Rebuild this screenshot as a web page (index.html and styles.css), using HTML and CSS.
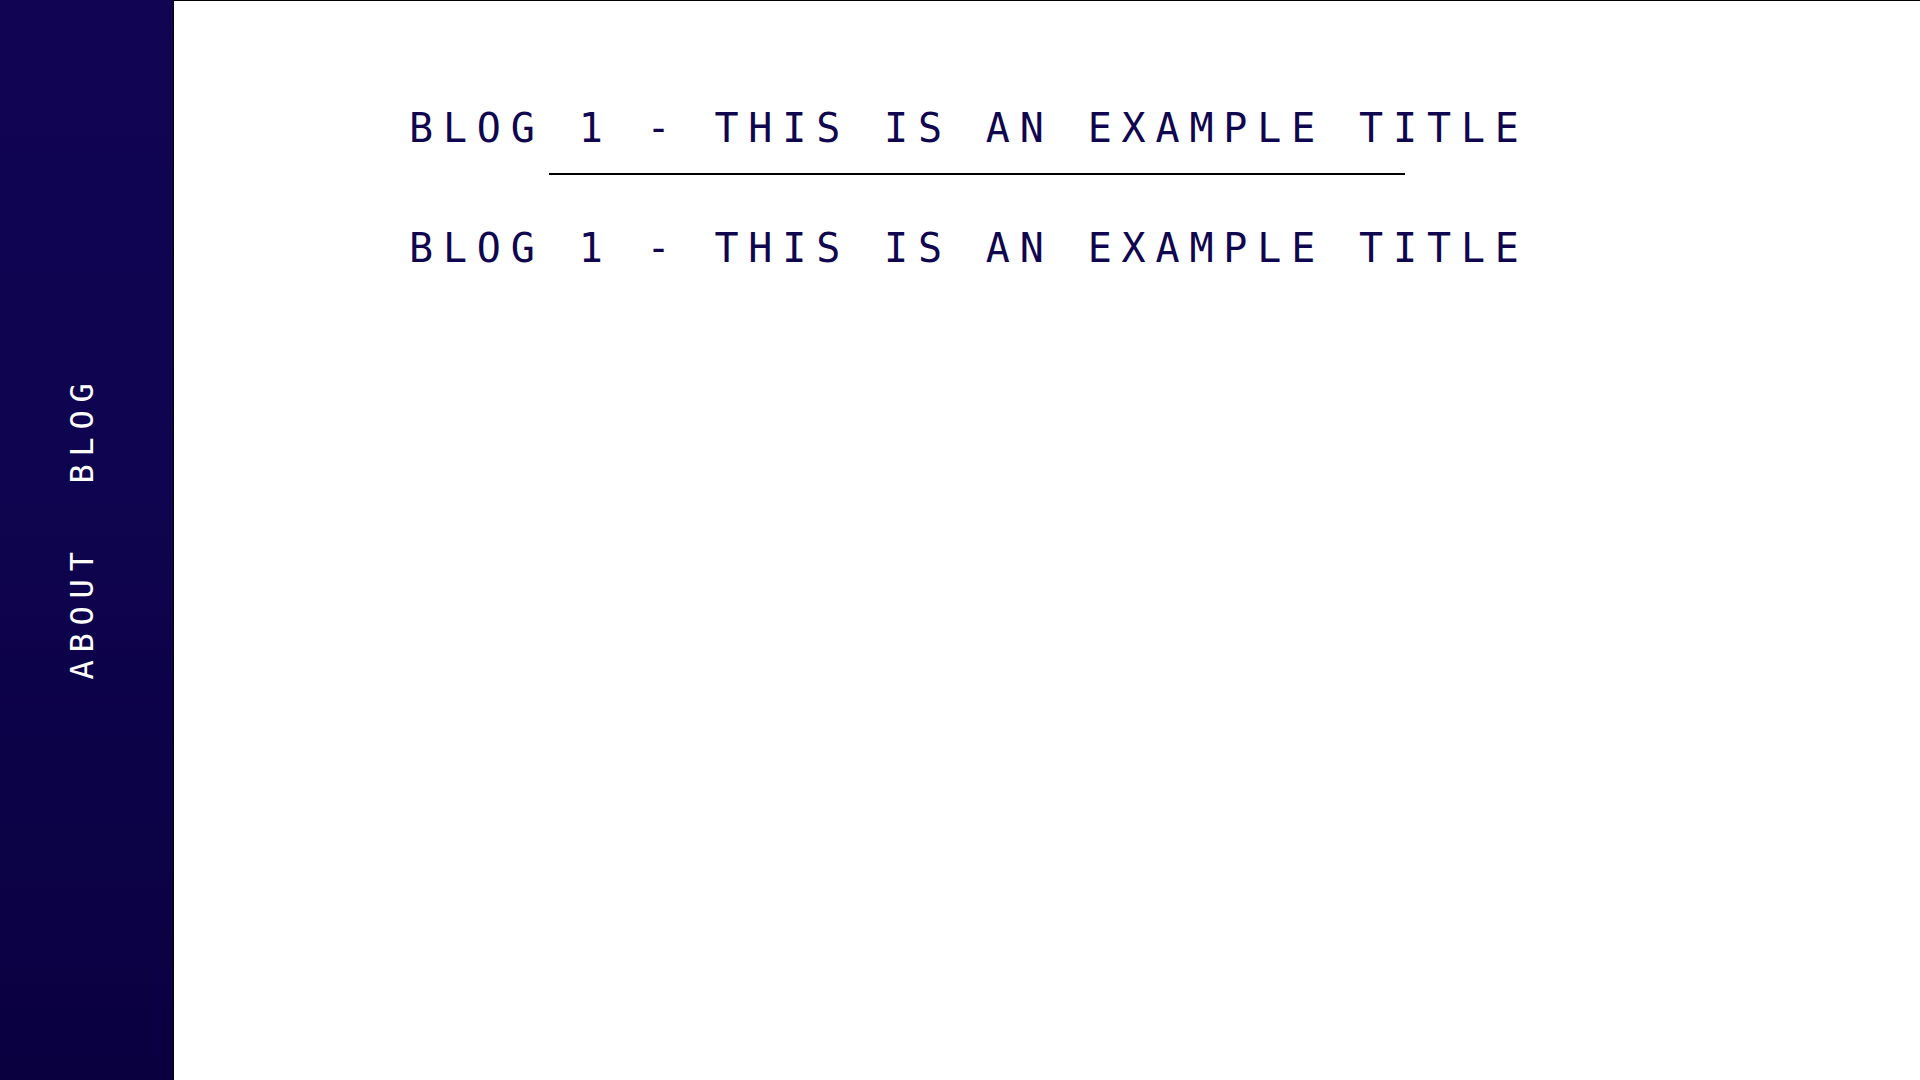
FILE: index.html
```html
<!DOCTYPE html>
<html lang="en">
<head>
<meta charset="utf-8">
<title>Blog</title>
<link rel="stylesheet" href="styles.css">
</head>
<body>
<div class="layout">
  <aside class="sidebar">
    <nav class="nav">
      <a class="nav-link" href="#">ABOUT</a>
      <a class="nav-link" href="#">BLOG</a>
    </nav>
  </aside>
  <main class="main">
    <section class="posts">
      <h2 class="post-title">BLOG 1 - THIS IS AN EXAMPLE TITLE</h2>
      <div class="divider"></div>
      <h2 class="post-title">BLOG 1 - THIS IS AN EXAMPLE TITLE</h2>
    </section>
  </main>
</div>
</body>
</html>
```

FILE: styles.css
```css
* { box-sizing: border-box; }
html, body { margin: 0; padding: 0; height: 100%; }
body {
  font-family: "DejaVu Sans Mono", "Liberation Mono", monospace;
  background: #ffffff;
}
.layout {
  display: flex;
  height: 100vh;
}
.sidebar {
  width: 173px;
  flex: 0 0 173px;
  background: linear-gradient(180deg, #110553 0%, #0f0450 40%, #0a0040 100%);
  display: flex;
  align-items: center;
  justify-content: center;
  padding-bottom: 26px;
}
.nav {
  writing-mode: vertical-rl;
  transform: rotate(180deg);
  display: flex;
  gap: 61px;
  margin-right: 8px;
}
.nav-link {
  color: #ffffff;
  text-decoration: none;
  font-size: 32px;
  letter-spacing: 7.8px;
  line-height: 1.164;
}
.main {
  flex: 1;
  border-top: 1px solid #000;
  border-left: 1px solid #000;
}
.posts {
  padding-top: 104px;
  padding-left: 235px;
}
.post-title {
  margin: 0;
  font-weight: normal;
  font-size: 40px;
  letter-spacing: 9.85px;
  color: #10064f;
  line-height: 1.164;
}
.divider {
  width: 856px;
  height: 2px;
  background: #000;
  margin: 21px 0 50px 140px;
}
```
